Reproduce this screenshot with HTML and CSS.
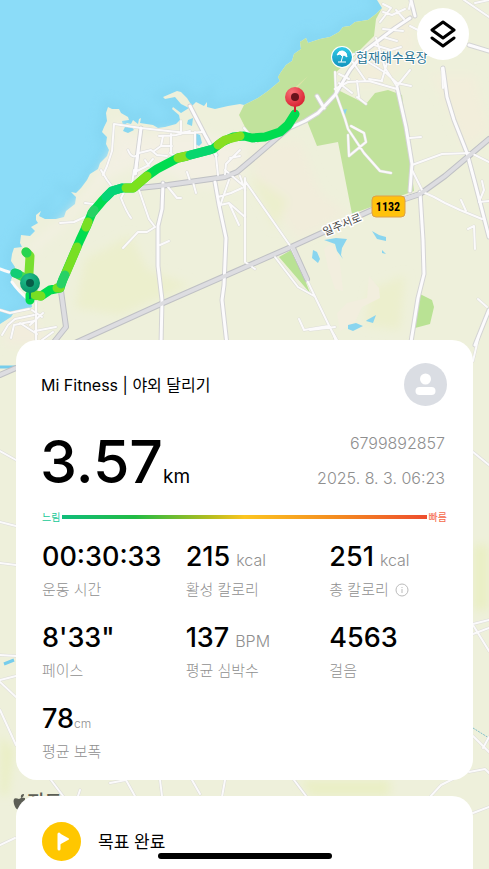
FILE: index.html
```html
<!DOCTYPE html>
<html lang="ko">
<head>
  <meta charset="UTF-8">
  <meta name="viewport" content="width=device-width, initial-scale=1">
  <title>Mi Fitness</title>
  <link rel="stylesheet" href="styles.css">
</head>
<body>
  <main class="page">

    <!-- 지도 -->
    <svg class="map" viewBox="0 0 489 869" preserveAspectRatio="xMidYMin slice" role="img" aria-label="달리기 경로 지도">
      <defs>
        <filter id="soft" x="-30%" y="-30%" width="160%" height="160%"><feGaussianBlur stdDeviation="5"/></filter>
        <linearGradient id="beach" x1="0" y1="0" x2="0" y2="1">
          <stop offset="0" stop-color="#32cbe6"/><stop offset="1" stop-color="#1193bd"/>
        </linearGradient>
        <radialGradient id="red" cx=".35" cy=".25" r=".8">
          <stop offset="0" stop-color="#f87076"/><stop offset="1" stop-color="#d81f30"/>
        </radialGradient>
        <radialGradient id="green" cx=".35" cy=".25" r=".8">
          <stop offset="0" stop-color="#20bd8c"/><stop offset="1" stop-color="#079466"/>
        </radialGradient>
        <path id="land" d="M377 0L382 8L376 14L368 20L355 22L350 26L343 27L339 32L330 37L320 39L308 43L306 38L300 42L301 49L294 54L292 61L286 65L281 72L278 77L280 81L268 91L258 98L244 105L240 104L228 106L215 109L207 107L207 102L204 106L196 102L192 106L187 98L181 92L177 91L163 97L165 99L175 97L181 104L189 108L181 113L173 107L172 109L179 115L180 120L176 124L165 127L158 128L153 125L140 123L141 118L139 119L138 124L133 120L131 124L127 123L123 126L122 121L129 120L128 117L121 113L119 109L112 109L108 107L106 113L107 121L104 127L102 132L107 137L106 144L109 150L107 156L100 163L98 169L90 174L87 180L81 188L76 193L71 192L76 197L75 204L66 211L64 217L56 219L45 219L39 216L41 211L36 215L36 220L38 223L31 227L35 231L30 236L21 235L20 243L22 247L14 248L12 254L11 261L15 267L14 272L11 280L18 291L26 296L31 301L32 307L20 312L15 311L11 317L0 324V869H489V0Z"/>
        <g id="small-roads">
          <path d="M114 124L141 128L168 131L188 133L202 132M114 124L112 151L107 166L103 175M141 128L136 174M128 150Q131 158 136 156M139 153L151 150L157 155L167 156M159 136L176 135L190 131M163 136L161 146L154 151M171 134L171 154M161 146L172 146M181 121L181 134M137 171L147 166L153 159M149 166L145 160M195 132V152M170 153L180 159M216 156L218 175M230 158L240 156M225 175L226 164L240 150"/>
          <path d="M244 128L256 142M101 170L107 180L113 188M126 188L121 198Q126 211 131 218M134 170L132 184M139 190L149 219L155 227M155 227L147 232L138 232L123 248M160 245L169 241M60 223L74 222L87 216M85 203L93 204M168 187L177 198L181 198M193 182L196 193M187 172L190 181M225 170L245 187M218 197L231 193L242 188M220 205L229 203L239 225M229 203L245 217M229 180L220 206M240 176L245 190M0 310L10 313L29 309M2 335L8 325L15 319L34 315M11 338L14 325L34 321M36 340V302M32 310L42 317M30 325L43 313M35 331L56 327M42 340L53 332M20 323L37 334"/>
          <path d="M335 72L336 94L345 119L348 129L364 153L380 171L391 173M351 126L364 133L366 142L349 156L348 135M357 97L366 104M335 89L348 82L369 81L397 89M357 81L359 97M339 83L352 93M369 79L382 81M376 38L385 68L396 85M352 61L365 80M374 45L391 50L401 47M383 37L397 41M383 29L403 31M383 12L392 15L405 9M396 10L404 19M380 22L391 8L383 4M410 26L420 31M360 57L386 73L397 83L411 86M397 86L410 70M342 62L354 54M390 53L382 80M339 74L349 79M411 0L409 9M475 3L489 0M464 0L489 17M410 138L421 137M443 88L442 68M412 165L442 154L471 153L489 162"/>
          <path d="M245 181L291 247L320 307L336 340M275 257L298 287L314 296M245 178V262L255 269M299 319L304 330L328 326M310 330L335 327M412 170L423 192L434 197L445 203L460 210L482 219M461 200L466 211M482 181L484 190L479 202M468 229L474 226L475 249M479 202L489 201M478 299L487 307M405 198L421 193M337 340L329 326"/>
          <path d="M0 451L16 460M0 522L16 526M0 563L16 565M0 655L16 656M0 680L16 676M0 682L16 697M0 710L16 745M51 780L66 800L72 815M110 783L126 780L136 798M0 845L15 838M80 790L77 799M160 780L162 796M192 780L200 794M225 780L222 797M294 780L306 796M429 798L441 785L457 777M473 452L489 465M473 361L479 335M473 634L489 628M473 624L489 620M473 625L489 651M473 736L489 752M483 748L489 737M469 772L485 769L489 773M473 813L489 807M412 335L410 345M334 335L337 345"/>
        </g>
        <g id="mid-roads">
          <path d="M141 128L135 174M190 106L205 135L216 155M163 183L162 209L158 226V266L162 300L161 345M215 182L219 205L226 238L224 285L222 300L227 345M410 18L395 28L366 50L350 70L335 95L318 113L305 121L292 127M317 96L324 108M397 87L406 127L412 164L410 191M443 68L447 97L454 120L467 153L475 183L489 237M420 192L423 240L424 274L418 298L411 342M489 310L475 345M411 0L415 16M469 45L489 51"/>
        </g>
        <path id="main-roads" d="M139 188L168 185L225 177L237 172L256 156L292 125M75 343L161 304L275 254L291 247L372 210L420 194L445 176L489 139M293 248L307 279M61 291L66 327L54 342M0 375L16 368"/>
      </defs>

      <rect width="489" height="869" fill="#8bdcf8"/>
      <use href="#land" fill="none" stroke="#81d3ef" stroke-width="14" opacity=".5" filter="url(#soft)"/>
      <use href="#land" fill="#eef0db"/>

      <!-- 땅 색 -->
      <g filter="url(#soft)">
        <path d="M116 117L130 135L190 130L248 145L240 190L190 185L145 162L110 178L65 225L30 255L28 248L62 219L90 187L112 150Z" fill="#f4f0e5" opacity=".8"/>
        <path d="M250 148L300 140L320 192L348 214L299 239L260 190Z" fill="#f1eddb"/>
        <path d="M430 75L475 75L489 130L465 150L447 105ZM390 20L410 5L415 50L380 85L350 85Z" fill="#f2eedb"/>
        <path d="M85 260L130 235L148 270L190 285L120 315L75 308ZM370 290L405 275L400 330L365 325ZM250 175L288 200L275 229Z" fill="#ecefcd"/>
        <path d="M8 325L32 312L48 345H4Z" fill="#f2eddd"/>
        <path d="M473 545H489V610H473ZM0 735L14 750L8 795H0ZM300 780H390V796H310Z" fill="#eaefc5"/>
      </g>
      <path d="M377 0L382 8L376 14L368 20L355 22L350 26L343 27L339 32L330 37L320 39L308 43L306 38L300 42L301 49L294 54L292 61L286 65L281 72L278 77L280 81L268 91L258 98L244 105L239 115L245 127L257 143L272 137L307 121L317 146L338 142L352 214L414 191L402 95L388 90L375 93L366 104L350 96L338 90L335 73L350 60L374 36L376 19L382 8Z" fill="#c1e29c"/>
      <path d="M279 257L293 249L310 293Z M420 294L432 300L434 307L430 324L415 328Z" fill="#b9e294"/>
      <path d="M292 90L308 76L298 87L293 96Z" fill="#dbe3a7"/>
      <path d="M324 249Q331 241 336 250L340 263L343 291L335 289L328 268ZM369 276L379 288L380 298L362 307L355 322L340 331L337 313L347 303L367 298Z" fill="#f2eede"/>
      <path d="M195 133L200 135L202 143L199 146L195 144ZM188 120L193 118L192 126L187 124ZM125 127L131 126L134 130L128 133L123 131Z" fill="#89d7f0"/>
      <path d="M324 240L336 238L347 239L342 248L341 255L343 259L337 251L335 244ZM313 250L317 252L320 259L318 263L312 258ZM372 231L379 235L386 237L386 241L377 239ZM382 250L386 254L382 253ZM348 325L356 323L363 326L353 331L348 329ZM367 320L376 315L373 323L366 321ZM342 110L347 109L345 115Z" fill="#89d5ef"/>
      <path d="M0 367H16M4 664L14 660" fill="none" stroke="#76cdec" stroke-width="3"/>
      <path d="M473 728L489 738" stroke="#7ebfcb" stroke-dasharray="2 1"/>

      <!-- 도로 -->
      <g fill="none" stroke-linecap="round" stroke-linejoin="round">
        <use href="#small-roads" stroke="#dcdcd8" stroke-width="3"/>
        <use href="#mid-roads" stroke="#d4d4d4" stroke-width="5"/>
        <use href="#main-roads" stroke="#bfc0c4" stroke-width="6"/>
        <use href="#small-roads" stroke="#fbfafb" stroke-width="2"/>
        <use href="#mid-roads" stroke="#fcfbfd" stroke-width="3"/>
        <use href="#main-roads" stroke="#dddde1" stroke-width="4"/>
        <path d="M0 269Q5 271 9 272M12 282Q18 291 29 300" stroke="#fbfaf9" stroke-width="3"/>
      </g>

      <!-- 달린 경로 -->
      <g fill="none" stroke-width="9" stroke-linecap="round" stroke-linejoin="round">
        <path d="M26 252L30 256L29 273" stroke="#78df30"/>
        <path d="M15 273L23 277L30 283" stroke="#48d94d"/>
        <path d="M15 273L18 274" stroke="#12cd75"/>
        <path d="M26 252L27 253" stroke="#28d451"/>
        <path d="M30 300V295L35 295L41 296L50 290L60 288L63 279L67 270L80 240L87 225L92 213L103 200L112 191L122 188L133 188L147 176L157 169L178 158L187 156L213 149L222 142L233 137L244 136L252 138L265 137L280 132L288 125L295 114" stroke="#00dc50"/>
        <path d="M35 295L41 296M57 288L60 288M66 273L77 247M86 227L88 222" stroke="#78df23"/>
        <path d="M61 284L65 275M92 213L94 210" stroke="#27d165"/>
        <path d="M106 197L112 191L122 188" stroke="#05d477"/>
        <path d="M126 188L133 188L147 176" stroke="#7be11d"/>
        <path d="M178 158L187 156M218 145L225 140L240 136" stroke="#87df22"/>
        <path d="M190 155L210 150" stroke="#08d66e"/>
      </g>

      <!-- 시작, 끝 핀 -->
      <path d="M295 100V112" stroke="#cd2434" stroke-width="2"/>
      <circle cx="295" cy="97" r="10" fill="url(#red)"/>
      <circle cx="295" cy="97" r="4" fill="#68131b"/>
      <path d="M30 288V299" stroke="#078f62" stroke-width="2"/>
      <circle cx="30" cy="283" r="10" fill="url(#green)"/>
      <circle cx="30" cy="283" r="4" fill="#075c48"/>

      <circle cx="342" cy="57" r="11" fill="#fff"/>
      <circle cx="342" cy="57" r="10" fill="url(#beach)"/>
      <path d="M337 55Q339 50 343 51Q347 52 347 57L344 55L342 56L340 54Z" fill="#fff" stroke="#fff" stroke-linejoin="round"/>
      <path d="M343 55L341 62M338 62H346" stroke="#fff"/>
      <text class="place" x="356" y="62">협재해수욕장</text>
      <text class="road-name" transform="translate(325 236) rotate(-23)">일주서로</text>
      <rect x="372" y="196" width="33" height="21" rx="4" fill="#ffc20d" stroke="#dca04a"/>
      <text class="road-number" x="388" y="211">1132</text>
      <path d="M21 798Q20 794 24 794Q24 797 21 798ZM19 799Q12 796 14 804Q16 811 19 809Q22 811 25 807V798Q22 797 19 799Z" fill="#5c5e55"/>
      <text class="map-brand" x="27" y="809">지도</text>
    </svg>

    <button class="layers" type="button" aria-label="지도 레이어">
      <svg width="26" height="28" viewBox="0 0 26 28" fill="none" stroke="#000" stroke-width="3" stroke-linejoin="round">
        <path d="M13 2L24 10L13 18L2 10Z"/>
        <path d="M2 18L13 26L24 18" stroke-linecap="round"/>
      </svg>
    </button>

    <!-- 운동 기록 -->
    <section class="card">
      <header class="card-header">
        <h1 class="title">Mi Fitness | 야외 달리기</h1>
        <svg class="avatar" viewBox="0 0 43 43" aria-hidden="true">
          <circle cx="21.5" cy="21.5" r="21.5" fill="#dadde3"/>
          <circle cx="21.5" cy="16" r="5.5" fill="#fff"/>
          <rect x="11.5" y="24" width="20" height="8" rx="4" fill="#fff"/>
        </svg>
      </header>

      <div class="summary">
        <div class="distance">3.57<span class="distance-unit">km</span></div>
        <div class="meta">
          <div>6799892857</div>
          <div>2025. 8. 3. 06:23</div>
        </div>
      </div>

      <div class="speed">
        <span class="slow">느림</span>
        <div class="speed-bar"></div>
        <span class="fast">빠름</span>
      </div>

      <dl class="stats">
        <div class="stat">
          <dd>00:30:33</dd>
          <dt>운동 시간</dt>
        </div>
        <div class="stat">
          <dd>215<span class="unit">kcal</span></dd>
          <dt>활성 칼로리</dt>
        </div>
        <div class="stat">
          <dd>251<span class="unit">kcal</span></dd>
          <dt>총 칼로리
            <svg class="info" viewBox="0 0 14 14" fill="none" stroke="#bbb" aria-hidden="true">
              <circle cx="7" cy="7" r="6"/><path d="M7 6V10M7 4V5"/>
            </svg>
          </dt>
        </div>
        <div class="stat">
          <dd>8'33"</dd>
          <dt>페이스</dt>
        </div>
        <div class="stat">
          <dd>137<span class="unit">BPM</span></dd>
          <dt>평균 심박수</dt>
        </div>
        <div class="stat">
          <dd>4563</dd>
          <dt>걸음</dt>
        </div>
        <div class="stat">
          <dd>78<span class="unit-small">cm</span></dd>
          <dt>평균 보폭</dt>
        </div>
      </dl>
    </section>

    <!-- 목표 -->
    <section class="card goal">
      <svg class="goal-icon" viewBox="0 0 39 39" aria-hidden="true">
        <circle cx="19.5" cy="19.5" r="19.5" fill="#ffc700"/>
        <path d="M17 12L26 17L17 22Z" fill="#fff" stroke="#fff" stroke-width="2" stroke-linejoin="round"/>
        <path d="M17 12V27" stroke="#fff" stroke-width="3" stroke-linecap="round"/>
      </svg>
      <h2 class="goal-title">목표 완료</h2>
    </section>

    <div class="home-bar"></div>
  </main>
</body>
</html>
```

FILE: styles.css
```css
* {
  box-sizing: border-box;
}
body {
  margin: 0;
  font-family: Inter, "Noto Sans CJK KR", sans-serif;
  color: #000;
}
.page {
  position: relative;
  display: flex;
  flex-direction: column;
  gap: 16px;
  min-height: 100vh;
  padding: 340px 16px 0; /* 카드 위로 지도가 보이는 영역 */
  overflow: hidden;
}

/* 지도 */
.map {
  position: absolute;
  inset: 0;
  width: 100%;
  height: 100%;
}
.place {
  font-size: 13px;
  font-weight: 400;
  fill: #2b7594;
  stroke: #fff;
  stroke-width: 2px;
  paint-order: stroke;
}
.road-name {
  font-size: 11px;
  fill: #444;
  stroke: #fff;
  stroke-width: 3px;
  paint-order: stroke;
}
.road-number {
  font-family: "Liberation Sans Narrow", "Roboto Condensed", Roboto, sans-serif;
  font-size: 12px;
  font-weight: 700;
  text-anchor: middle;
}
.map-brand {
  font-size: 19px;
  font-weight: 500;
  fill: #5c5e55;
}
.layers {
  position: absolute;
  top: 8px;
  right: 20px;
  display: flex;
  align-items: center;
  justify-content: center;
  width: 52px;
  height: 52px;
  padding: 0;
  border: 0;
  border-radius: 50%;
  background-color: #fff;
}

/* 카드 */
.card {
  position: relative;
  padding: 23px 0 17px;
  border-radius: 21px;
  background-color: #fff;
}
.card-header {
  display: flex;
  align-items: center;
  justify-content: space-between;
  padding: 0 26px 0 25px;
}
.title {
  margin: 0;
  font-size: 16px;
  font-weight: 400;
  line-height: 24px;
}
.avatar {
  width: 43px;
  height: 43px;
}
.summary {
  display: flex;
  justify-content: space-between;
  margin-top: 20px;
  padding: 0 28px 0 24px;
}
.distance {
  font-size: 59px;
  font-weight: 500;
  line-height: 72px;
}
.distance-unit {
  font-size: 19px;
  font-weight: 400;
  line-height: 1;
}
.meta {
  color: #8f8f8f;
  font-size: 16px;
  font-weight: 300;
  line-height: 35px;
  text-align: right;
}

/* 속도 막대 */
.speed {
  display: flex;
  align-items: center;
  gap: 2px;
  margin-top: 12px;
  padding: 0 26px;
  font-size: 10px;
  line-height: 14px;
}
.speed-bar {
  flex: 1;
  height: 4px;
  background: linear-gradient(to right, #10bd7b, #21bb44 20%, #b0bd20 40%, #fcc51f 50%, #f48c20 75%, #ee4d2d);
}
.slow {
  color: #20c997;
}
.fast {
  color: #f5694b;
}

/* 기록 */
.stats {
  display: grid;
  grid-template-columns: repeat(3, 1fr);
  row-gap: 21px;
  margin: 17px 0 0;
  padding-left: 26px;
}
.stat {
  display: flex;
  flex-direction: column;
  gap: 6px;
}
.stat dd {
  margin: 0;
  font-size: 27px;
  font-weight: 500;
  line-height: 32px;
  white-space: nowrap;
}
.stat dt {
  display: flex;
  align-items: center;
  gap: 6px;
  color: #8f8f8f;
  font-size: 15px;
  font-weight: 300;
  line-height: 22px;
}
.unit {
  margin-left: 6px;
  color: #8f8f8f;
  font-size: 16px;
  font-weight: 300;
  line-height: 1;
}
.unit-small {
  color: #8f8f8f;
  font-size: 12px;
  font-weight: 300;
  line-height: 1;
}
.info {
  width: 14px;
  height: 14px;
}

/* 목표 */
.goal {
  flex: 1;
  display: flex;
  align-items: flex-start;
  gap: 17px;
  padding: 26px 26px 0;
  border-radius: 21px 21px 0 0;
}
.goal-icon {
  width: 39px;
  height: 39px;
}
.goal-title {
  margin: 0;
  font-size: 17px;
  font-weight: 400;
  line-height: 41px;
}
.home-bar {
  position: absolute;
  bottom: 10px;
  left: 50%;
  width: 174px;
  height: 6px;
  margin-left: -87px;
  border-radius: 3px;
  background-color: #000;
}
```
